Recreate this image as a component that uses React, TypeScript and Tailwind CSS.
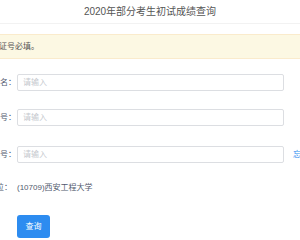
export default function App() {
  const font = { fontFamily: '"Liberation Sans", "Noto Sans CJK SC", sans-serif' };
  return (
    <div className="w-[300px] h-[240px] overflow-hidden bg-white text-[#515a6e]" style={font}>
      <div className="h-[24px] border-b border-[#f2f2f2] flex items-center justify-center text-[10px] text-[#555] leading-none">
        2020年部分考生初试成绩查询
      </div>
      <div className="mt-[10px] h-[25px] border-y border-[#faebcc] bg-[#fcf8e3] flex items-center text-[8px] text-[#555] whitespace-nowrap">
        <span className="ml-[-17px]">身份证号必填。</span>
      </div>
      <div className="flex items-center mt-[15px] text-[8px] whitespace-nowrap">
        <div className="w-[80px] ml-[-64px] text-right shrink-0">姓名：</div>
        <div className="ml-[1px] w-[267px] h-[17px] border border-[#dcdee2] rounded-[2px] flex items-center px-[5px] text-[#c5c8ce] shrink-0">请输入</div>
      </div>
      <div className="flex items-center mt-[18px] text-[8px] whitespace-nowrap">
        <div className="w-[80px] ml-[-64px] text-right shrink-0">身份证号：</div>
        <div className="ml-[1px] w-[267px] h-[17px] border border-[#dcdee2] rounded-[2px] flex items-center px-[5px] text-[#c5c8ce] shrink-0">请输入</div>
      </div>
      <div className="flex items-center mt-[20px] text-[8px] whitespace-nowrap">
        <div className="w-[80px] ml-[-64px] text-right shrink-0">考生编号：</div>
        <div className="ml-[1px] w-[267px] h-[17px] border border-[#dcdee2] rounded-[2px] flex items-center px-[5px] text-[#c5c8ce] shrink-0">请输入</div>
        <a className="ml-[9px] text-[#2d8cf0] shrink-0">忘记考生编号？</a>
      </div>
      <div className="flex items-center mt-[16px] h-[17px] text-[8px] whitespace-nowrap">
        <div className="w-[80px] ml-[-68px] text-right shrink-0">报考单位：</div>
        <div className="ml-[5px] shrink-0">(10709)西安工程大学</div>
      </div>
      <div className="mt-[19px] ml-[17px]">
        <button className="w-[33px] h-[23px] rounded-[3px] bg-[#2d8cf0] text-white text-[8px] flex items-center justify-center">
          查询
        </button>
      </div>
    </div>
  );
}
